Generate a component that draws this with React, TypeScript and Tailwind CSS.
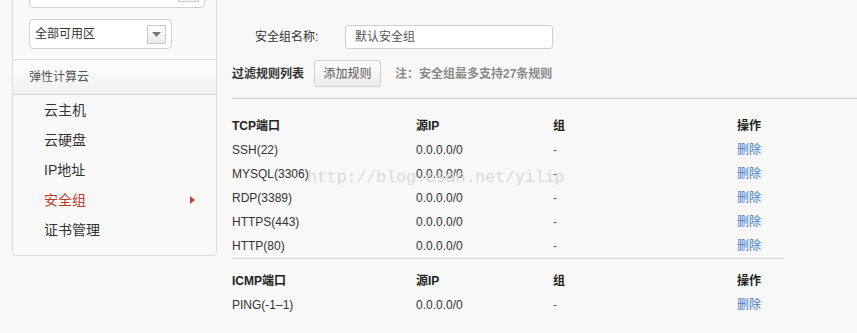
import React from "react";

const font = { fontFamily: '"Liberation Sans", Arial, "Noto Sans CJK SC", sans-serif' };

const tcpRows = [
  ["SSH(22)", "0.0.0.0/0", "-"],
  ["MYSQL(3306)", "0.0.0.0/0", "-"],
  ["RDP(3389)", "0.0.0.0/0", "-"],
  ["HTTPS(443)", "0.0.0.0/0", "-"],
  ["HTTP(80)", "0.0.0.0/0", "-"],
];

function Row({ cells, header }: { cells: string[]; header?: boolean }) {
  return (
    <div className={`grid grid-cols-[184px_137px_184px_1fr] h-[24px] items-center text-[12px] ${header ? "font-bold text-[#222]" : "text-[#333]"}`}>
      <div>{cells[0]}</div>
      <div>{cells[1]}</div>
      <div className={header ? "" : "text-[#555]"}>{cells[2]}</div>
      <div className={header ? "" : "text-[#3f7ac6]"}>{cells[3]}</div>
    </div>
  );
}

export default function App() {
  const items = ["云主机", "云硬盘", "IP地址", "安全组", "证书管理"];
  return (
    <div className="w-[857px] h-[333px] bg-[#f8f8f8] overflow-hidden relative flex" style={font}>
      {/* Sidebar */}
      <div className="ml-[12px] mt-[-30px] w-[205px] h-[286px] shrink-0 border border-[#dcdcdc] rounded-[4px] bg-[#f9f9f9] flex flex-col">
        <div className="px-[16px] pt-[7px] pb-[10px] border-b border-[#dcdcdc]">
          <div className="h-[30px] w-[176px] border border-[#cfcfcf] rounded-[4px] bg-white relative">
            <div className="absolute right-[5px] bottom-[5px] w-[21px] h-[20px] border border-[#ccc] bg-[#f2f2f2]" />
          </div>
          <div className="mt-[11px] h-[30px] w-[143px] border border-[#d0d0d0] rounded-[4px] bg-white flex items-center justify-between pl-[5px] pr-[5px] text-[12px] text-[#333]">
            <span>全部可用区</span>
            <div className="w-[19px] h-[19px] border border-[#c8c8c8] bg-gradient-to-b from-white to-[#ebebeb] flex items-center justify-center">
              <svg width="9" height="5" viewBox="0 0 9 5"><path d="M0 0h9L4.5 5z" fill="#777" /></svg>
            </div>
          </div>
        </div>
        <div className="h-[35px] border-b border-[#d4d4d4] bg-gradient-to-b from-white to-[#f0f0f0] flex items-center pl-[16px] text-[12px] text-[#555]">
          弹性计算云
        </div>
        <div>
          {items.map((t) => (
            <div key={t} className={`h-[30px] flex items-center justify-between pl-[31px] pr-[21px] text-[14px] ${t === "安全组" ? "text-[#c0392b]" : "text-[#333]"}`}>
              <span>{t}</span>
              {t === "安全组" && (
                <svg width="5" height="8" viewBox="0 0 5 8"><path d="M0 0l5 4-5 4z" fill="#b9472e" /></svg>
              )}
            </div>
          ))}
        </div>
      </div>

      {/* Main */}
      <div className="ml-[15px] flex-1 flex flex-col">
        <div className="mt-[25px] flex items-center h-[24px]">
          <span className="ml-[23px] w-[90px] text-[12px] text-[#333]">安全组名称:</span>
          <div className="w-[208px] h-[24px] border border-[#cfcfcf] rounded-[3px] bg-white flex items-center pl-[9px] text-[12px] text-[#555]">
            默认安全组
          </div>
        </div>
        <div className="mt-[11px] flex items-center h-[27px]">
          <span className="text-[12px] font-bold text-[#333]">过滤规则列表</span>
          <div className="ml-[10px] w-[67px] h-[27px] border border-[#cfcfcf] rounded-[3px] bg-gradient-to-b from-white to-[#ececec] flex items-center justify-center text-[12px] text-[#555]">
            添加规则
          </div>
          <span className="ml-[14px] text-[12px] font-bold text-[#8a8a8a]">注：安全组最多支持27条规则</span>
        </div>
        <div className="mt-[11px] h-[1px] bg-[#d0d0d0] w-full" />
        <div className="mt-[15px] w-[552px]">
          <Row header cells={["TCP端口", "源IP", "组", "操作"]} />
          {tcpRows.map((r) => (
            <Row key={r[0]} cells={[r[0], r[1], r[2], "删除"]} />
          ))}
          <div className="h-[1px] bg-[#d6d6d6]" />
          <div className="mt-[10px]">
            <Row header cells={["ICMP端口", "源IP", "组", "操作"]} />
            <Row cells={["PING(-1–1)", "0.0.0.0/0", "-", "删除"]} />
          </div>
        </div>
      </div>

      <div
        className="absolute left-[307px] top-[166px] text-[16.5px] text-[#d8d8d8] pointer-events-none whitespace-nowrap"
        style={{ fontFamily: '"Liberation Mono", "Courier New", monospace' }}
      >
        http://blog.csdn.net/yilip
      </div>
    </div>
  );
}
